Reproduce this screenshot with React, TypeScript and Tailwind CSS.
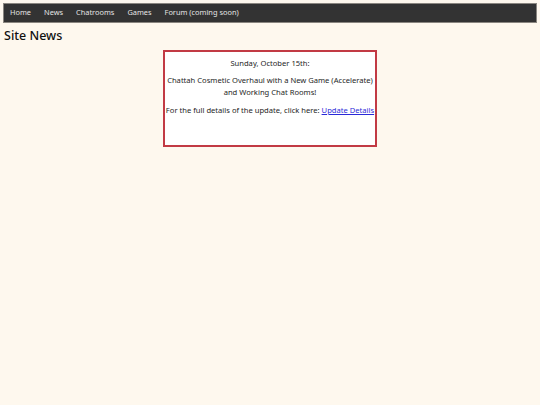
import React from "react";

const links = ["Home", "News", "Chatrooms", "Games", "Forum (coming soon)"];

export default function App() {
    return (
        <div className="min-h-[405px] w-full bg-[#fef8ee] pt-[3px] text-[#222]" style={{ fontFamily: '"Noto Sans", Lato, sans-serif' }}>
            {/* Top nav */}
            <nav className="mx-[3px] flex h-[20px] items-center gap-[13px] border border-[#8a8680] bg-[#333333] pl-[6px]">
                {links.map((l) => (
                    <a key={l} className="text-[7.4px] leading-none text-[#e4e4e4]">
                        {l}
                    </a>
                ))}
            </nav>

            <h1 className="ml-[4px] mt-[4px] text-[12.5px] font-medium leading-[18px] text-[#111]">Site News</h1>

            {/* News box */}
            <div className="mx-auto mt-[5px] h-[97px] w-[214px] border-2 border-[#c23a44] bg-white pt-[5px] text-center text-[7.6px] leading-[12px] text-[#1e1e1e]">
                <p>Sunday, October 15th:</p>
                <p className="mt-[5px]">
                    Chattah Cosmetic Overhaul with a New Game (Accelerate)
                    <br />
                    and Working Chat Rooms!
                </p>
                <p className="mt-[6px] whitespace-nowrap">
                    For the full details of the update, click here:{" "}
                    <a className="text-[#2a2ad8] underline">Update Details</a>
                </p>
            </div>
        </div>
    );
}
